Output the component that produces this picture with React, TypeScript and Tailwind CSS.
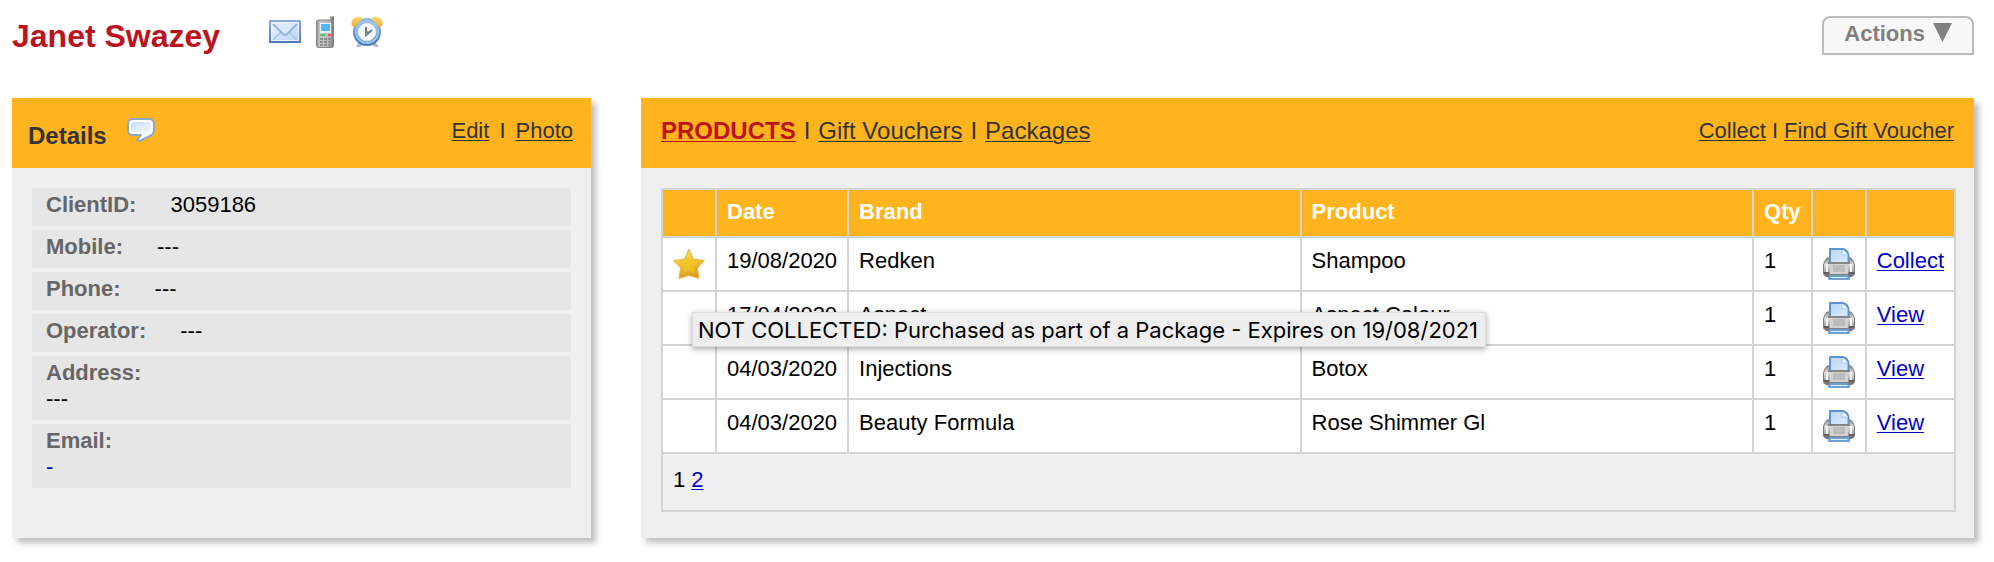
import type { ReactNode } from "react";

const details = [
  { label: "ClientID:", value: "3059186" },
  { label: "Mobile:", value: "---" },
  { label: "Phone:", value: "---" },
  { label: "Operator:", value: "---" },
];

const products = [
  { date: "19/08/2020", brand: "Redken", product: "Shampoo", qty: 1, action: "Collect", starred: true },
  { date: "17/04/2020", brand: "Aspect", product: "Aspect Colour", qty: 1, action: "View" },
  { date: "04/03/2020", brand: "Injections", product: "Botox", qty: 1, action: "View" },
  { date: "04/03/2020", brand: "Beauty Formula", product: "Rose Shimmer Gl", qty: 1, action: "View" },
];

function MailIcon() {
  return (
    <svg width="32" height="32" viewBox="0 0 32 32" className="block">
      <defs>
        <linearGradient id="mail" x1="0" y1="0" x2="1" y2="1">
          <stop offset="0" stopColor="#e9f2ff" />
          <stop offset="1" stopColor="#bcd5f8" />
        </linearGradient>
        <linearGradient id="mailEdge" x1="0" y1="0" x2="0" y2="1">
          <stop offset="0" stopColor="#86aadf" />
          <stop offset="1" stopColor="#4a77c0" />
        </linearGradient>
      </defs>
      <rect x="0" y="4" width="32" height="23" fill="url(#mailEdge)" />
      <rect x="2" y="6" width="28" height="19" fill="#eef5ff" />
      <rect x="3" y="7" width="26" height="17" fill="url(#mail)" />
      <path d="M4 24 L12 16 M28 24 L20 16" stroke="#a9c4ec" strokeWidth="1.5" />
      <path d="M4 8 L14 18 Q16 20 18 18 L28 8" fill="#dceafd" stroke="#93b3e3" strokeWidth="2" />
    </svg>
  );
}

function PhoneIcon() {
  return (
    <svg width="32" height="32" viewBox="0 0 32 32" className="block">
      <defs>
        <linearGradient id="phone" x1="0" y1="0" x2="1" y2="0">
          <stop offset="0" stopColor="#8d8d8d" />
          <stop offset="0.2" stopColor="#c9c9c9" />
          <stop offset="0.8" stopColor="#b3b3b3" />
          <stop offset="1" stopColor="#6d6d6d" />
        </linearGradient>
      </defs>
      <path d="M20 0.500 H24 V8 H20 Z" fill="#777" />
      <path d="M20 1 H22 V6 H20 Z" fill="#aaa" />
      <rect x="6.500" y="4" width="17" height="27.500" rx="2" fill="url(#phone)" stroke="#858585" />
      <rect x="10" y="7" width="11" height="10" fill="#e9f6ff" />
      <rect x="11" y="8" width="9" height="7" fill="#55b5fb" />
      <rect x="10" y="18" width="5" height="2" fill="#5cc368" />
      <rect x="18" y="18" width="3" height="2" fill="#ea5468" />
      <path
        d="M10 22h3v2h-3z M14 22h3v2h-3z M18 22h3v2h-3z M10 25h3v2h-3z M14 25h3v2h-3z M18 25h3v2h-3z M10 28h3v2h-3z M14 28h3v2h-3z M18 28h3v2h-3z"
        fill="#8f8f8f"
      />
    </svg>
  );
}

function ClockIcon() {
  return (
    <svg width="32" height="32" viewBox="0 0 32 32" className="block">
      <defs>
        <linearGradient id="clock" x1="0" y1="0" x2="0" y2="1">
          <stop offset="0" stopColor="#8dbbe8" />
          <stop offset="1" stopColor="#3d74b8" />
        </linearGradient>
        <linearGradient id="bell" x1="0" y1="0" x2="0" y2="1">
          <stop offset="0" stopColor="#fbd978" />
          <stop offset="1" stopColor="#eeb030" />
        </linearGradient>
      </defs>
      <path d="M8 26 L5 31 H9 L12 28 Z M24 26 L28 31 H24 L20 28 Z" fill="#b9b9b9" />
      <circle cx="16" cy="16" r="14" fill="url(#clock)" />
      <circle cx="16" cy="16" r="11" fill="none" stroke="#9cc3ea" strokeWidth="2" />
      <circle cx="16" cy="16" r="9" fill="#f4f8fc" stroke="#d5e2ef" />
      <path d="M1 10 Q-1 5 3 2 Q8 -1 12 2 L4 11 Q2 11 1 10 Z" fill="url(#bell)" />
      <path d="M31 10 Q33 5 29 2 Q24 -1 20 2 L28 11 Q30 11 31 10 Z" fill="url(#bell)" />
      <path d="M15 11 V19 L21 14" fill="none" stroke="#6d7680" strokeWidth="2" />
      <circle cx="16" cy="17" r="2" fill="#7f8890" />
    </svg>
  );
}

function CommentIcon() {
  return (
    <svg width="28" height="24" viewBox="0 0 28 24" className="block">
      <defs>
        <linearGradient id="bubble" x1="0" y1="0" x2="1" y2="1">
          <stop offset="0" stopColor="#c9defa" />
          <stop offset="1" stopColor="#f6faff" />
        </linearGradient>
      </defs>
      <path
        d="M6 1 H22 Q27 1 27 6 V12 Q27 16 23 18 L13 23 L10 22 L14 17 H6 Q1 17 1 12 V6 Q1 1 6 1 Z"
        fill="#fff"
        stroke="#8ea9c4"
        strokeWidth="2"
        strokeLinejoin="round"
      />
      <path d="M7 4 H21 Q24 4 24 7 V11 Q24 14 21 14 L16 17 V14 H7 Q4 14 4 11 V7 Q4 4 7 4 Z" fill="url(#bubble)" />
    </svg>
  );
}

function StarIcon() {
  return (
    <svg width="32" height="32" viewBox="0 0 32 32" className="block">
      <defs>
        <linearGradient id="star" x1="0" y1="0" x2="0.300" y2="1">
          <stop offset="0" stopColor="#f6e08a" />
          <stop offset="0.500" stopColor="#f1c62e" />
          <stop offset="1" stopColor="#dd9f22" />
        </linearGradient>
      </defs>
      <path
        d="M16 1 L20.500 11 L31.500 12.500 L24.500 20 L26 30.500 L16 27.500 L6 30.500 L7.500 20 L0.500 12.500 L11.500 11 Z"
        fill="url(#star)"
        stroke="#e6b64a"
        strokeLinejoin="round"
      />
      <path d="M16 7 L19 13 L25 14 L21 19 L22 25 L16 23 L10 25 L11 19 L7 14 L13 13 Z" fill="#f4c921" opacity="0.600" />
    </svg>
  );
}

function PrinterIcon() {
  return (
    <svg width="32" height="32" viewBox="0 0 32 32" className="block">
      <defs>
        <linearGradient id="printer" x1="0" y1="0" x2="0" y2="1">
          <stop offset="0" stopColor="#8c8c8c" />
          <stop offset="0.350" stopColor="#dcdcdc" />
          <stop offset="0.700" stopColor="#a8a8a8" />
          <stop offset="1" stopColor="#5c5c5c" />
        </linearGradient>
        <linearGradient id="paper" x1="0" y1="0" x2="1" y2="1">
          <stop offset="0" stopColor="#b7d6fa" />
          <stop offset="1" stopColor="#dcebff" />
        </linearGradient>
      </defs>
      <path d="M4 10 H28 Q31 13 31.500 17 V26 Q31 28 27 29 H5 Q1 28 0.500 26 V17 Q1 13 4 10 Z" fill="url(#printer)" stroke="#7c7c7c" />
      <path d="M7 15 V1 H20 Q25 2 25.500 8 V15 Z" fill="url(#paper)" stroke="#5b93cf" strokeWidth="2" />
      <path d="M19 2 V7 H25" fill="#f7fbff" stroke="#a5c6ea" />
      <rect x="5" y="14" width="22" height="2" fill="#858585" />
      <rect x="7" y="16" width="18" height="10" fill="#d2d2d2" />
      <rect x="10" y="17" width="12" height="7" fill="#bcbcbc" />
      <path d="M4 16 V25 M28 16 V25" stroke="#f3f3f3" strokeWidth="2" />
      <path d="M1 25 H6 M26 25 H31" stroke="#5f5f5f" strokeWidth="2" />
      <path d="M7 28 H25 L26 31 H6 Z" fill="#e4f0ff" stroke="#6a9fd8" strokeWidth="2" strokeLinejoin="round" />
    </svg>
  );
}

function HeaderLink({ children }: { children: ReactNode }) {
  return (
    <a href="#" className="text-[#333] underline decoration-1 underline-offset-2">
      {children}
    </a>
  );
}

export default function App() {
  const headCell = "border-2 border-[#d4d4d4] px-2.5 pt-[9px] pb-[11px] align-top text-left whitespace-nowrap";
  const cell = "border-2 border-[#d4d4d4] p-2.5 align-top text-left whitespace-nowrap";

  return (
    <div className="pl-3 pr-5 pt-4 pb-6 bg-white text-black text-[22px] leading-[26px] font-['Liberation_Sans',Arial,sans-serif]">
      <header className="flex items-start justify-between mb-[42px]">
        <div className="flex items-start">
          <h1 className="text-[32px] leading-10 font-bold text-[#bc1320] mr-[49px]">Janet Swazey</h1>
          <div className="flex gap-[9px]">
            <a href="#" aria-label="Send email"><MailIcon /></a>
            <a href="#" aria-label="Send SMS"><PhoneIcon /></a>
            <a href="#" aria-label="Reminders"><ClockIcon /></a>
          </div>
        </div>
        <button
          type="button"
          className="flex items-start gap-2 border-2 border-[#bbb] rounded-t-lg bg-[#f7f7f7] px-5 pt-[3px] pb-1.5 font-bold text-[#808080]"
        >
          Actions
          <svg width="19" height="22" viewBox="0 0 19 22" fill="currentColor" className="block">
            <path d="M0 2 H19 L9.500 21 Z" />
          </svg>
        </button>
      </header>

      <main className="grid grid-cols-[579fr_1333fr] gap-[50px]">
        <section className="bg-[#efefef] shadow-[5px_5px_6px_rgba(0,0,0,0.25)]">
          <div className="flex items-start justify-between h-[70px] bg-[#ffb31c] pl-4 pr-[18px] pt-5">
            <div className="flex items-start gap-5">
              <h2 className="text-2xl leading-9 font-bold text-[#333]">Details</h2>
              <a href="#" aria-label="Comments"><CommentIcon /></a>
            </div>
            <div className="flex gap-2.5 text-[#333]">
              <HeaderLink>Edit</HeaderLink>
              <span>I</span>
              <HeaderLink>Photo</HeaderLink>
            </div>
          </div>
          <dl className="flex flex-col gap-1 p-5 pb-[50px]">
            {details.map((d) => (
              <div key={d.label} className="flex gap-[34px] bg-[#e6e6e6] px-3.5 pt-1 pb-2">
                <dt className="font-bold text-[#666]">{d.label}</dt>
                <dd>{d.value}</dd>
              </div>
            ))}
            <div className="bg-[#e6e6e6] px-3.5 pt-1 pb-2">
              <dt className="font-bold text-[#666]">Address:</dt>
              <dd>---</dd>
            </div>
            <div className="bg-[#e6e6e6] px-3.5 pt-1 pb-2">
              <dt className="font-bold text-[#666]">Email:</dt>
              <dd><a href="#" className="text-[#0000cc]">-</a></dd>
            </div>
          </dl>
        </section>

        <section className="bg-[#efefef] shadow-[5px_5px_6px_rgba(0,0,0,0.25)]">
          <div className="flex items-start justify-between h-[70px] bg-[#ffb31c] px-5 pt-5 text-[#333]">
            <nav className="flex gap-2 text-2xl leading-[26px]">
              <a href="#" className="font-bold text-[#bc1320] underline decoration-1 underline-offset-2">
                PRODUCTS
              </a>
              <span>I</span>
              <HeaderLink>Gift Vouchers</HeaderLink>
              <span>I</span>
              <HeaderLink>Packages</HeaderLink>
            </nav>
            <div className="flex gap-1.5">
              <HeaderLink>Collect</HeaderLink>
              <span>I</span>
              <HeaderLink>Find Gift Voucher</HeaderLink>
            </div>
          </div>

          <div className="pt-5 pl-5 pr-[18px]">
            <table className="w-full border-collapse">
              <thead>
                <tr className="bg-[#ffb31c] text-white">
                  <th className={headCell}></th>
                  <th className={headCell}>Date</th>
                  <th className={`${headCell} w-[35%]`}>Brand</th>
                  <th className={`${headCell} w-[35%]`}>Product</th>
                  <th className={headCell}>Qty</th>
                  <th className={headCell}></th>
                  <th className={headCell}></th>
                </tr>
              </thead>
              <tbody>
                {products.map((p, i) => (
                  <tr key={i} className="bg-white">
                    <td className={cell}>
                      {p.starred && (
                        <div className="relative">
                          <StarIcon />
                          <div
                            role="tooltip"
                            className="absolute left-[19px] top-16 z-10 bg-[#eee] border border-[#dcdcdc] pl-[5px] pr-[7px] pt-1 pb-[3px] shadow-[0_2px_6px_rgba(0,0,0,0.35)] font-[Inter,sans-serif]"
                          >
                            NOT COLLECTED: Purchased as part of a Package - Expires on 19/08/2021
                          </div>
                        </div>
                      )}
                    </td>
                    <td className={cell}>{p.date}</td>
                    <td className={cell}>{p.brand}</td>
                    <td className={cell}>{p.product}</td>
                    <td className={cell}>{p.qty}</td>
                    <td className={cell}>
                      <a href="#" aria-label="Print"><PrinterIcon /></a>
                    </td>
                    <td className={cell}>
                      <a href="#" className="text-[#0000cc] underline decoration-1 underline-offset-2">{p.action}</a>
                    </td>
                  </tr>
                ))}
              </tbody>
              <tfoot>
                <tr>
                  <td colSpan={7} className="border-2 border-[#d4d4d4] px-2.5 pt-[13px] pb-[17px]">
                    1 <a href="#" className="text-[#0000cc] underline decoration-1 underline-offset-2">2</a>
                  </td>
                </tr>
              </tfoot>
            </table>
          </div>
        </section>
      </main>
    </div>
  );
}
